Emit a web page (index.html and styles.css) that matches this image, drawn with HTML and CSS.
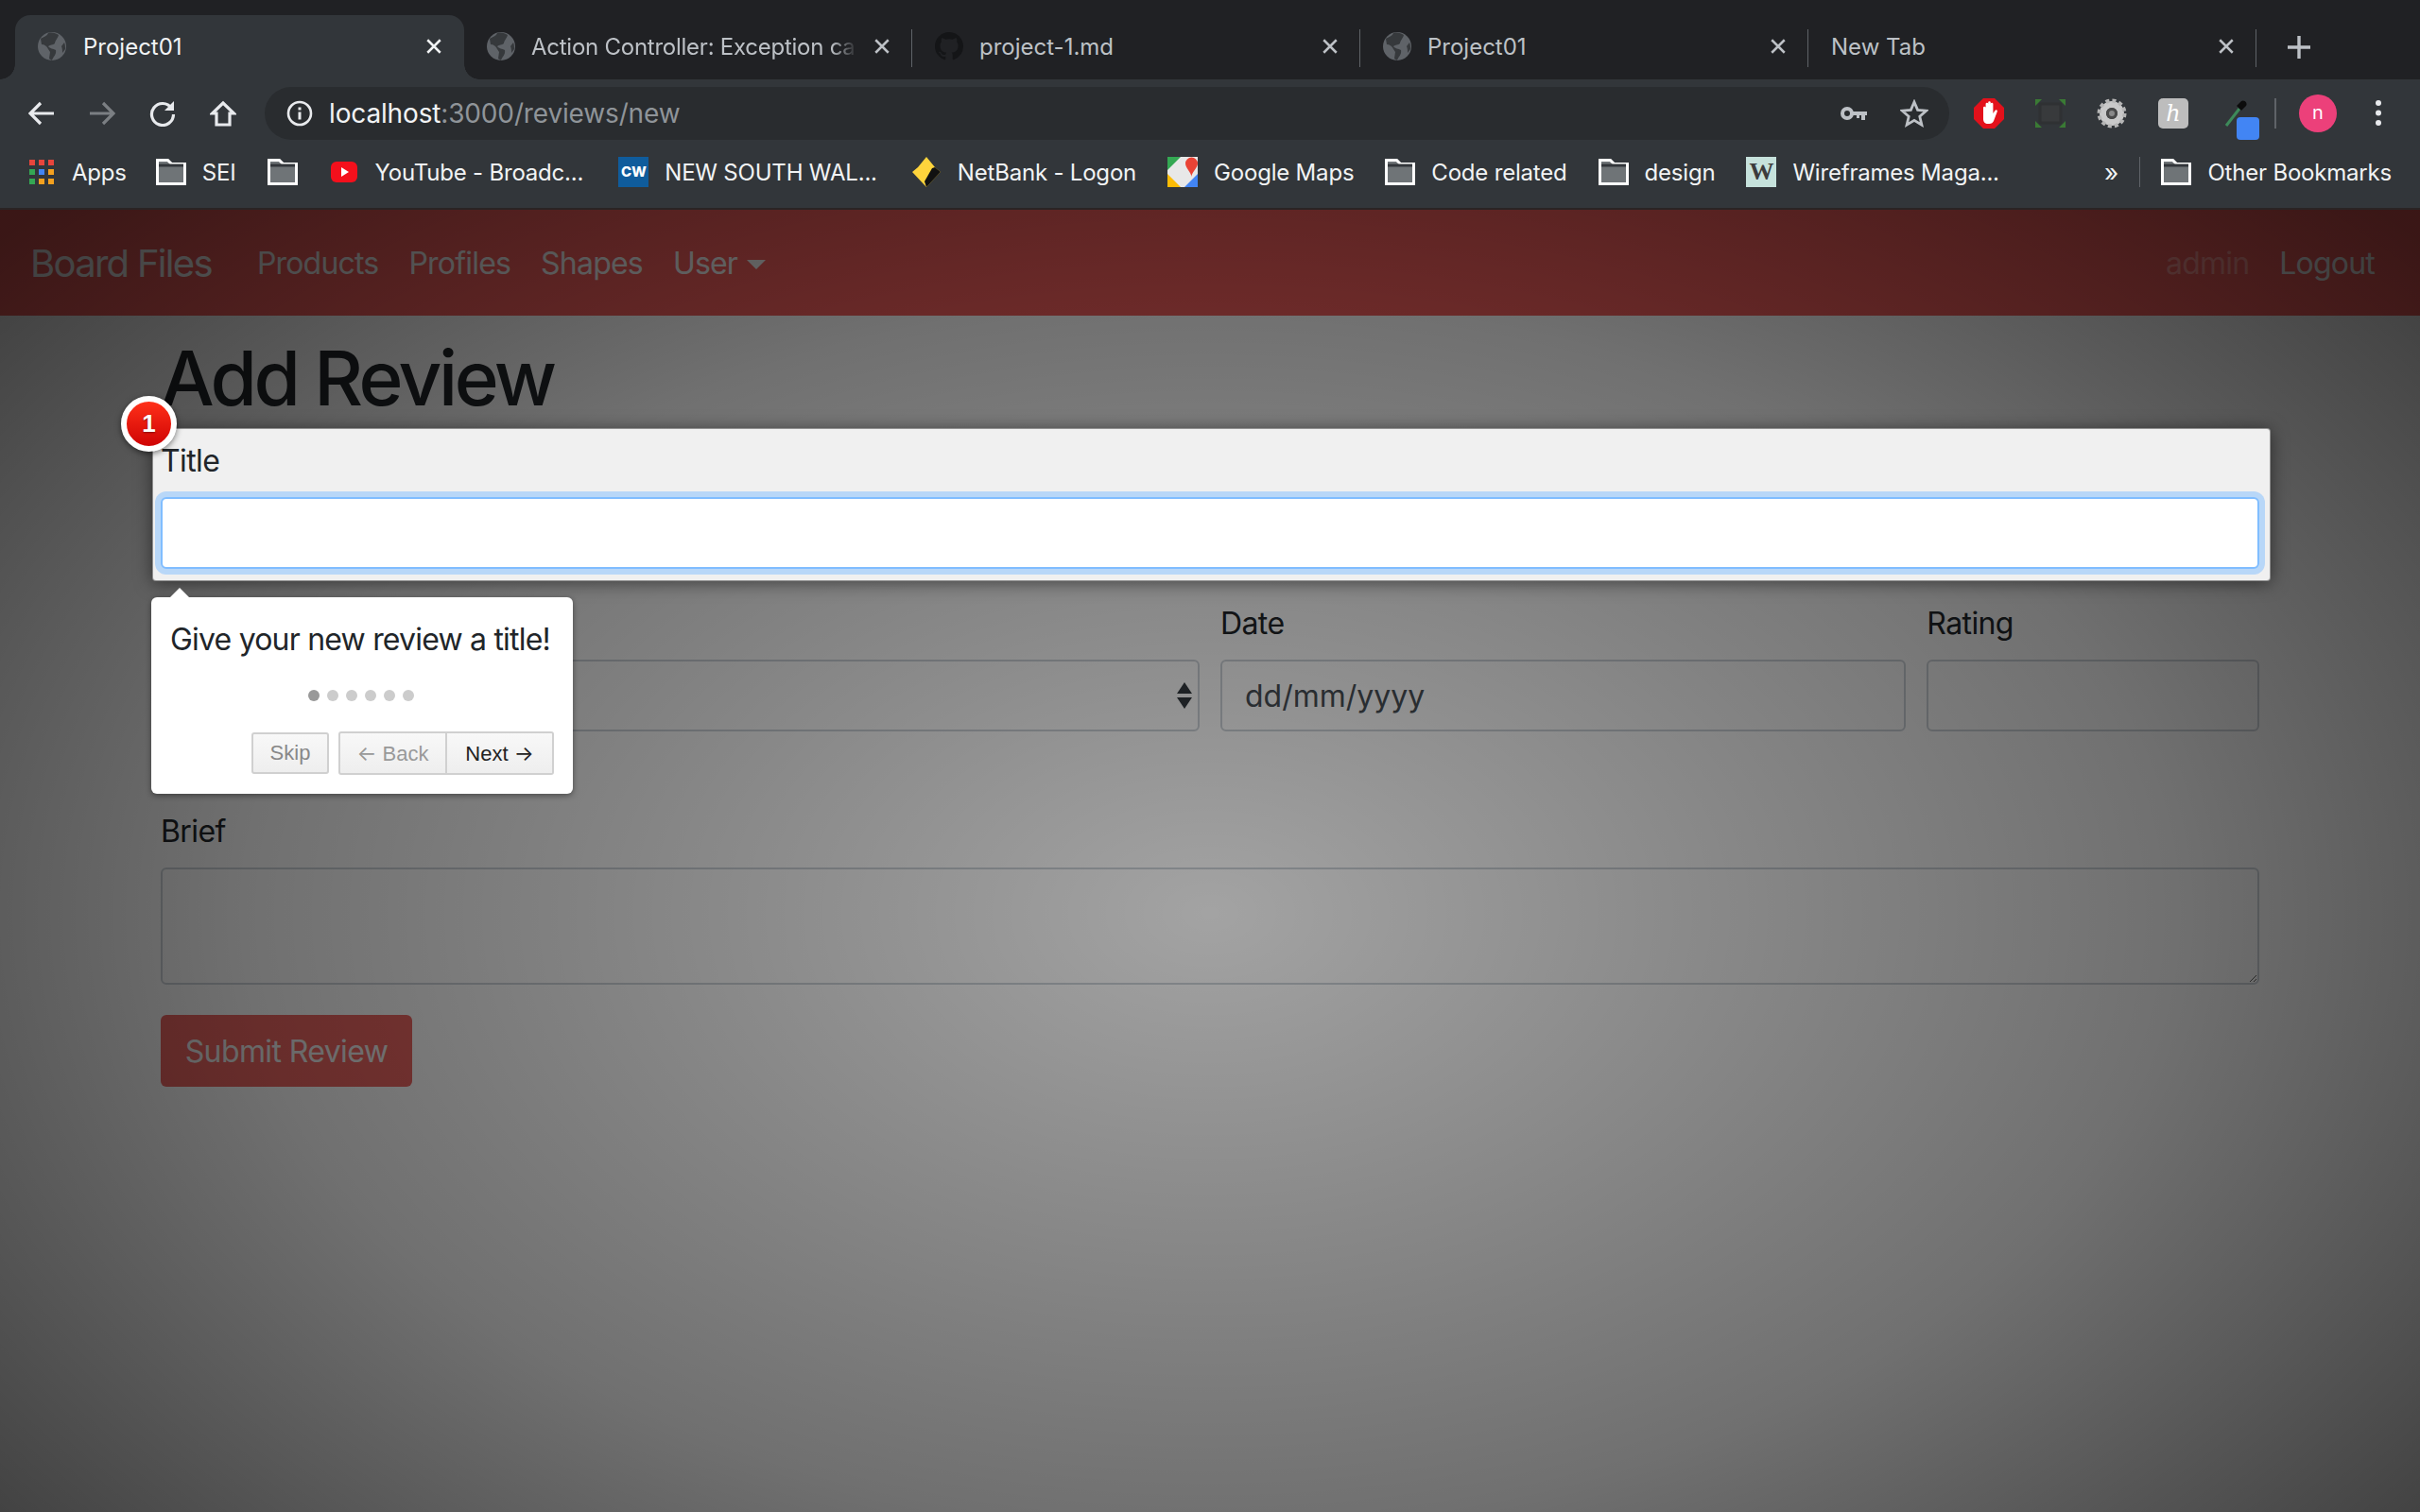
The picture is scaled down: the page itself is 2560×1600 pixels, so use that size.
FILE: index.html
```html
<!DOCTYPE html>
<html lang="en">
  <head>
    <meta charset="UTF-8" />
    <title>Project01</title>
    <link rel="stylesheet" href="styles.css">
  </head>
  <body>
    <svg class="sprites" width="0" height="0">
      <symbol id="globe" viewBox="0 0 30 30">
        <circle cx="15" cy="15" r="15" fill="#5f6368"/>
        <path d="M11 1c-1 3-5 4-8 6l1 6c3 0 6 2 7 5l2 3-1 7 3 2c1-4 5-6 4-11-3-2-6-1-8-4 2-2 5-1 7-3 0-3 3-5 4-9-3-2-7-3-11-2zM25 15c1 2 1 5 1 7l3-4c0-2 0-5-1-7z" fill="#36393c"/>
      </symbol>
      <symbol id="close" viewBox="0 0 16 16">
        <path d="M2 2l12 12M14 2L2 14" fill="none" stroke="currentColor" stroke-width="2.2"/>
      </symbol>
      <symbol id="folder" viewBox="0 0 32 28">
        <path d="M1.5 26.5V1.5h11l4 4h14v21z" fill="#6f7477" stroke="#fff" stroke-width="3"/>
        <path d="M3 7h26" stroke="#32363a" stroke-width="3"/>
      </symbol>
    </svg>

    <!-- tabs -->
    <div class="tabstrip">
      <div class="tab tab-active">
        <svg class="favicon"><use href="#globe"/></svg>
        <span class="tab-label">Project01</span>
        <svg class="tab-close"><use href="#close"/></svg>
      </div>
      <div class="tab">
        <svg class="favicon"><use href="#globe"/></svg>
        <span class="tab-label tab-fade">Action Controller: Exception ca</span>
        <svg class="tab-close"><use href="#close"/></svg>
      </div>
      <div class="tab">
        <svg class="favicon" viewBox="0 0 16 16"><path fill="#141517" d="M8 0C3.58 0 0 3.58 0 8c0 3.54 2.29 6.53 5.47 7.59.4.07.55-.17.55-.38 0-.19-.01-.82-.01-1.49-2.01.37-2.53-.49-2.69-.94-.09-.23-.48-.94-.82-1.13-.28-.15-.68-.52-.01-.53.63-.01 1.08.58 1.23.82.72 1.21 1.87.87 2.33.66.07-.52.28-.87.51-1.07-1.78-.2-3.64-.89-3.64-3.95 0-.87.31-1.59.82-2.15-.08-.2-.36-1.02.08-2.12 0 0 .67-.21 2.2.82.64-.18 1.32-.27 2-.27.68 0 1.36.09 2 .27 1.53-1.04 2.2-.82 2.2-.82.44 1.1.16 1.92.08 2.12.51.56.82 1.27.82 2.15 0 3.07-1.87 3.75-3.65 3.95.29.25.54.73.54 1.48 0 1.07-.01 1.93-.01 2.2 0 .21.15.46.55.38A8.013 8.013 0 0016 8c0-4.42-3.58-8-8-8z"/></svg>
        <span class="tab-label">project-1.md</span>
        <svg class="tab-close"><use href="#close"/></svg>
      </div>
      <div class="tab">
        <svg class="favicon"><use href="#globe"/></svg>
        <span class="tab-label">Project01</span>
        <svg class="tab-close"><use href="#close"/></svg>
      </div>
      <div class="tab">
        <span class="tab-label">New Tab</span>
        <svg class="tab-close"><use href="#close"/></svg>
      </div>
      <svg class="new-tab" viewBox="0 0 24 24"><path d="M12 0v24M0 12h24" stroke="#bdc1c6" stroke-width="3.4"/></svg>
    </div>

    <!-- toolbar -->
    <div class="toolbar">
      <svg class="nav-icon nav-back" viewBox="0 0 28 26"><path d="M27 13H3M13 2L2 13l11 11" fill="none" stroke="#e8eaed" stroke-width="3.2"/></svg>
      <svg class="nav-icon nav-forward" viewBox="0 0 28 26"><path d="M1 13h24M15 2l11 11-11 11" fill="none" stroke="#7b7f83" stroke-width="3.2"/></svg>
      <svg class="nav-icon nav-reload" viewBox="0 0 28 28"><path d="M23.5 8.5A11.5 11.5 0 1 0 25.5 15" fill="none" stroke="#e8eaed" stroke-width="3.2"/><path d="M26 1v10H16z" fill="#e8eaed"/></svg>
      <svg class="nav-icon nav-home" viewBox="0 0 28 28"><path d="M14 3L2.500 14H7v12h14V14h4.500z" fill="none" stroke="#e8eaed" stroke-width="3.200"/></svg>

      <div class="omnibox">
        <svg class="site-info" viewBox="0 0 28 28"><circle cx="14" cy="14" r="12" fill="none" stroke="#e8eaed" stroke-width="2.600"/><path d="M14 12.500v8M14 7.500v3" stroke="#e8eaed" stroke-width="3"/></svg>
        <span class="url"><span class="url-host">localhost</span>:3000/reviews/new</span>
        <svg class="omni-key" viewBox="0 0 28 16"><circle cx="7" cy="8" r="5" fill="none" stroke="#bdc1c6" stroke-width="4"/><path d="M11 6h17v4h-2v5h-4v-5h-2v3h-3v-3h-6z" fill="#bdc1c6"/></svg>
        <svg class="omni-star" viewBox="0 0 30 30"><path d="M15 3l3.600 8.400 9.100.8-6.900 6 2.100 8.900L15 22.400l-7.900 4.700 2.100-8.900-6.900-6 9.100-.8z" fill="none" stroke="#bdc1c6" stroke-width="2.800"/></svg>
      </div>

      <div class="extensions">
        <svg class="ext ext-block" viewBox="0 0 32 32"><path d="M10 0h12l10 10v12L22 32H10L0 22V10z" fill="#e3111b"/><path d="M10 15V10a1.300 1.300 0 0 1 2.600 0V6a1.300 1.300 0 0 1 2.600 0V4.500a1.300 1.300 0 0 1 2.600 0V6a1.300 1.300 0 0 1 2.600 0v10l2-3c1-1.500 3-.500 2.400 1l-3.800 10c-.8 2-2.500 3-4.500 3H15c-3 0-5-2-5-5z" fill="#fff"/></svg>
        <svg class="ext ext-frame" viewBox="0 0 32 30"><rect x="5" y="5" width="22" height="20" rx="1" fill="#383a3c" stroke="#2f3133" stroke-width="3"/><path d="M0 0h7L0 7zM32 0h-7l7 7zM0 30h7l-7-7zM32 30h-7l7-7z" fill="#3a7a34"/></svg>
        <svg class="ext ext-gear" viewBox="0 0 32 32"><circle cx="16" cy="16" r="9.500" fill="none" stroke="#c9c9c9" stroke-width="7"/><circle cx="16" cy="16" r="13.500" fill="none" stroke="#b5b5b5" stroke-width="4" stroke-dasharray="4 3.070"/><circle cx="16" cy="16" r="6" fill="#4a4a4a"/><circle cx="16" cy="16" r="3" fill="#8a8a8a"/></svg>
        <div class="ext ext-kite">h</div>
        <div class="ext-dropper">
          <svg class="dropper" viewBox="0 0 28 32"><path d="M4 29L18 11" stroke="#3d8a5a" stroke-width="3"/><path d="M15 8l5 5 5-5c2-3-2-7-5-5z" fill="#0c0c0c"/></svg>
          <span class="dropper-badge"></span>
        </div>
        <span class="ext-divider"></span>
        <div class="avatar">n</div>
        <svg class="menu-dots" viewBox="0 0 6 28"><circle cx="3" cy="3" r="3" fill="#e8eaed"/><circle cx="3" cy="13.500" r="3" fill="#e8eaed"/><circle cx="3" cy="24" r="3" fill="#e8eaed"/></svg>
      </div>
    </div>

    <!-- bookmarks -->
    <div class="bookmarks">
      <div class="bm bm-apps">
        <svg class="bm-icon" viewBox="0 0 26 26">
          <path d="M0 0h6v6H0zM10 0h6v6h-6zM20 0h6v6h-6z" fill="#e8453c"/>
          <path d="M0 10h6v6H0z" fill="#34a853"/><path d="M10 10h6v6h-6z" fill="#4285f4"/><path d="M20 10h6v6h-6z" fill="#f4a11f"/>
          <path d="M0 20h6v6H0z" fill="#34a853"/><path d="M10 20h6v6h-6zM20 20h6v6h-6z" fill="#f4a11f"/>
        </svg>
        Apps
      </div>
      <div class="bm"><svg class="bm-icon bm-folder"><use href="#folder"/></svg>SEI</div>
      <div class="bm"><svg class="bm-icon bm-folder"><use href="#folder"/></svg></div>
      <div class="bm">
        <svg class="bm-icon" viewBox="0 0 28 28"><rect y="3" width="28" height="22" rx="6" fill="#f4101c"/><path d="M11 9l8 5-8 5z" fill="#fff"/></svg>
        YouTube - Broadc...
      </div>
      <div class="bm bm-cw">
        <div class="bm-square bm-square-cw">CW</div>
        NEW SOUTH WAL...
      </div>
      <div class="bm bm-netbank">
        <svg class="bm-icon bm-tall" viewBox="0 0 32 32"><path d="M16 0l9 11 6 5-15 16L1 16l6-5z" fill="#ffd43c"/><path d="M31 16L16 32l-2-6 8-14 3-1z" fill="#111"/></svg>
        NetBank - Logon
      </div>
      <div class="bm">
        <svg class="bm-icon bm-tall" viewBox="0 0 32 32"><path d="M0 0h32v32H0z" fill="#e8e8e8"/><path d="M0 0h14L0 14z" fill="#34a853"/><path d="M0 32V18l14 14z" fill="#fbbc05"/><path d="M18 32L32 18v14z" fill="#4285f4"/><path d="M19 7a6.500 6.500 0 0 1 13 0c0 5-6.500 9-6.500 14-.5-5-6.500-9-6.500-14z" fill="#ea4335"/></svg>
        Google Maps
      </div>
      <div class="bm"><svg class="bm-icon bm-folder"><use href="#folder"/></svg>Code related</div>
      <div class="bm"><svg class="bm-icon bm-folder"><use href="#folder"/></svg>design</div>
      <div class="bm">
        <div class="bm-square bm-square-w">W</div>
        Wireframes Maga...
      </div>
      <span class="bm-more">»</span>
      <span class="bm-divider"></span>
      <div class="bm"><svg class="bm-icon bm-folder"><use href="#folder"/></svg>Other Bookmarks</div>
    </div>

    <!-- page -->
    <div class="page">
      <nav class="navbar">
        <a class="brand">Board Files</a>
        <a class="nav-link">Products</a>
        <a class="nav-link">Profiles</a>
        <a class="nav-link">Shapes</a>
        <a class="nav-link nav-caret">User</a>
        <a class="nav-link nav-admin">admin</a>
        <a class="nav-link">Logout</a>
      </nav>

      <main class="content">
        <h1>Add Review</h1>
        <form>
          <div class="form-group title-group">
            <label class="field-label">Title</label>
            <input class="field field-focus" type="text">
            <span class="step-badge">1</span>

            <div class="tour-tip">
              <p class="tour-text">Give your new review a title!</p>
              <div class="tour-dots">
                <span class="dot dot-on"></span>
                <span class="dot"></span>
                <span class="dot"></span>
                <span class="dot"></span>
                <span class="dot"></span>
                <span class="dot"></span>
              </div>
              <div class="tour-buttons">
                <button type="button" class="tour-btn tour-skip">Skip</button>
                <div class="tour-pair">
                  <button type="button" class="tour-btn tour-back"><span class="tour-arrow">←</span> Back</button>
                  <button type="button" class="tour-btn tour-next">Next <span class="tour-arrow">→</span></button>
                </div>
              </div>
            </div>
          </div>

          <div class="form-row">
            <div class="col col-6">
              <label class="field-label">Product</label>
              <div class="select-wrap"><select class="field"><option></option></select></div>
            </div>
            <div class="col col-4">
              <label class="field-label">Date</label>
              <input class="field" type="text" placeholder="dd/mm/yyyy">
            </div>
            <div class="col col-2">
              <label class="field-label">Rating</label>
              <input class="field" type="text">
            </div>
          </div>

          <div class="form-group">
            <label class="field-label">Brief</label>
            <textarea class="field field-area"></textarea>
          </div>

          <button type="button" class="btn-submit">Submit Review</button>
        </form>
      </main>

      <div class="overlay"></div>
    </div>
  </body>
</html>
```

FILE: styles.css
```css
* {
  box-sizing: border-box;
}

html,
body {
  margin: 0;
  height: 100%;
}

body {
  display: flex;
  flex-direction: column;
  font-family: Inter, "Noto Sans", sans-serif;
  background: #fff;
  overflow: hidden;
}

.sprites {
  position: absolute;
}

/* tabs */
.tabstrip {
  display: flex;
  align-items: flex-end;
  height: 84px;
  padding-left: 16px;
  background: #202124;
  flex: none;
}

.tab {
  position: relative;
  display: flex;
  align-items: center;
  gap: 17px;
  width: 474px;
  height: 68px;
  padding: 0 20px 2px 24px;
  color: #bdc1c6;
  font-size: 24px;
}

.tab::after {
  content: "";
  position: absolute;
  right: 0;
  top: 15px;
  height: 40px;
  width: 1.500px;
  background: #5f6368;
}

.tab-active {
  width: 475px;
  gap: 18px;
  color: #f1f3f4;
  background: #32363a;
  border-radius: 16px 16px 0 0;
}

.tab-active::after {
  display: none;
}

.tab-active::before {
  content: "";
  position: absolute;
  left: -16px;
  right: -16px;
  bottom: 0;
  height: 16px;
  z-index: 0;
  background:
    radial-gradient(circle at 0 0, #202124 15.500px, #32363a 16px) left bottom / 16px 16px no-repeat,
    radial-gradient(circle at 100% 0, #202124 15.500px, #32363a 16px) right bottom / 16px 16px no-repeat;
  pointer-events: none;
}

.favicon {
  width: 30px;
  height: 36px;
  flex: none;
}

.tab-label {
  flex: 1;
  white-space: nowrap;
  overflow: hidden;
}

.tab-fade {
  letter-spacing: -0.25px;
  -webkit-mask-image: linear-gradient(to right, #000 92%, transparent 100%);
  mask-image: linear-gradient(to right, #000 92%, transparent 100%);
}

.tab-close {
  position: relative;
  width: 18px;
  height: 18px;
  flex: none;
  margin-right: 3px;
}

.new-tab {
  width: 24px;
  height: 24px;
  margin: 0 0 22px 33px;
}

/* toolbar */
.toolbar {
  display: flex;
  align-items: center;
  height: 72px;
  padding-left: 30px;
  background: #32363a;
  flex: none;
}

.nav-icon {
  width: 28px;
  height: 28px;
  flex: none;
}

.nav-forward,
.nav-reload,
.nav-home {
  margin-left: 36px;
}

.omnibox {
  display: flex;
  align-items: center;
  width: 1782px;
  height: 56px;
  margin-left: 30px;
  padding: 0 22px 0 23px;
  background: #292c2f;
  border-radius: 28px;
  flex: none;
}

.site-info {
  width: 28px;
  height: 28px;
  flex: none;
}

.url {
  flex: 1;
  margin-left: 17px;
  font-size: 28px;
  letter-spacing: -0.15px;
  color: #8f9499;
}

.url-host {
  color: #f1f3f4;
}

.omni-key {
  width: 28px;
  height: 16px;
}

.omni-star {
  width: 30px;
  height: 30px;
  margin-left: 35px;
}

.extensions {
  display: flex;
  align-items: center;
  margin-left: 26px;
  flex: 1;
}

.ext {
  width: 32px;
  height: 32px;
  flex: none;
}

.ext-frame,
.ext-gear,
.ext-kite {
  margin-left: 33px;
}

.ext-kite {
  border-radius: 5px;
  background: #bdbdbd;
  color: #fff;
  font-family: "DejaVu Serif", serif;
  font-style: italic;
  font-size: 24px;
  line-height: 32px;
  text-align: center;
}

.ext-dropper {
  position: relative;
  width: 32px;
  height: 32px;
  margin-left: 36px;
}

.dropper {
  width: 28px;
  height: 32px;
}

.dropper-badge {
  position: absolute;
  left: 15px;
  top: 20px;
  width: 24px;
  height: 24px;
  border-radius: 4px;
  background: #4285f4;
}

.ext-divider {
  width: 2px;
  height: 32px;
  margin-left: 23px;
  background: #5f6368;
}

.avatar {
  width: 40px;
  height: 40px;
  margin-left: 24px;
  border-radius: 50%;
  background: #ec407a;
  color: #fff;
  font-size: 20px;
  line-height: 38px;
  text-align: center;
}

.menu-dots {
  width: 6px;
  height: 28px;
  margin-left: 41px;
}

/* bookmarks */
.bookmarks {
  display: flex;
  align-items: center;
  gap: 33px;
  height: 66px;
  padding: 0 0 12px 31px;
  background: #32363a;
  border-bottom: 2px solid #2a2424;
  color: #f1f3f4;
  font-size: 24px;
  letter-spacing: -0.2px;
  flex: none;
}

.bm {
  display: flex;
  align-items: center;
  gap: 17px;
  white-space: nowrap;
}

.bm-apps {
  gap: 19px;
  margin-right: -2px;
}

.bm-cw {
  margin-left: 4px;
}

.bm-netbank {
  margin-left: 3px;
}

.bm-icon {
  width: 32px;
  height: 28px;
  flex: none;
}

.bm-apps .bm-icon {
  width: 26px;
  height: 26px;
}

.bm-tall {
  height: 32px;
}

.bm-square {
  width: 32px;
  height: 32px;
  flex: none;
  text-align: center;
}

.bm-square-cw {
  background: #0f5c9c;
  color: #fff;
  font-size: 15px;
  font-weight: 800;
  line-height: 32px;
}

.bm-square-w {
  background: #c6e2dc;
  color: #3c3c3c;
  font-family: "Liberation Serif", serif;
  font-size: 26px;
  font-weight: 700;
  line-height: 32px;
}

.bm-more {
  margin-left: auto;
  margin-right: -11px;
  font-size: 26px;
}

.bm-divider {
  width: 1.500px;
  height: 32px;
  margin-right: -11px;
  background: #5f6368;
}

.bookmarks > .bm:last-child {
  margin-right: 30px;
}

/* page */
.page {
  position: relative;
  flex: 1;
  color: #212529;
  letter-spacing: -0.6px;
}

.overlay {
  position: absolute;
  inset: 0;
  z-index: 5;
  background: radial-gradient(ellipse 1700px 1080px at 50% 54%, rgba(0, 0, 0, 0.36) 0%, rgba(0, 0, 0, 0.56) 60%, rgba(0, 0, 0, 0.76) 100%);
}

.navbar {
  display: flex;
  align-items: center;
  height: 112px;
  padding: 0 32px;
  background: #f25e5c;
  font-size: 32px;
}

.brand {
  margin-right: 32px;
  font-size: 40px;
  letter-spacing: -1.7px;
  color: #fff;
}

.nav-link {
  padding: 0 16px;
  letter-spacing: -0.8px;
  color: #f4f4f4;
}

.nav-caret::after {
  content: "";
  display: inline-block;
  margin-left: 10px;
  vertical-align: 5px;
  border-top: 10px solid #f4f4f4;
  border-left: 10px solid transparent;
  border-right: 10px solid transparent;
}

.nav-admin {
  margin-left: auto;
  color: #ff9a96;
}

.content {
  padding: 18px 170px 0;
}

h1 {
  margin: 0 0 14px;
  font-size: 80px;
  font-weight: 500;
  line-height: 96px;
  letter-spacing: -3.5px;
}

.form-group {
  margin-bottom: 32px;
}

.field-label {
  display: block;
  margin-bottom: 14px;
  padding-top: 2px;
  font-size: 32px;
  line-height: 48px;
}

.field {
  display: block;
  width: 100%;
  height: 76px;
  padding: 12px 24px;
  background: #fff;
  border: 2px solid #ced4da;
  border-radius: 6px;
  color: #495057;
  font: inherit;
  font-size: 32px;
  outline: none;
  appearance: none;
}

.field::placeholder {
  color: #495057;
  opacity: 1;
}

.field-area {
  height: 124px;
}

.select-wrap {
  position: relative;
}

.select-wrap::before,
.select-wrap::after {
  content: "";
  position: absolute;
  right: 8px;
  border-left: 8px solid transparent;
  border-right: 8px solid transparent;
}

.select-wrap::before {
  top: 24px;
  border-bottom: 12px solid #343a40;
}

.select-wrap::after {
  top: 40px;
  border-top: 12px solid #343a40;
}

.form-row {
  display: flex;
  margin: 0 -11px 80px;
}

.col {
  padding: 0 11px;
}

.col-6 {
  width: 50%;
}

.col-4 {
  width: 33.333%;
}

.col-2 {
  width: 16.667%;
}

.btn-submit {
  display: block;
  width: 266px;
  height: 76px;
  background: #ec6662;
  border: 0;
  border-radius: 6px;
  color: #eee;
  font: inherit;
  font-size: 32px;
  letter-spacing: -0.6px;
}

/* highlighted step */
.title-group {
  position: relative;
  z-index: 10;
  margin-bottom: 32px;
}

.title-group::before {
  content: "";
  position: absolute;
  inset: -9px -12px -13px -9px;
  z-index: -1;
  background: #f0f0f0;
  border: 1px solid rgba(80, 80, 80, 0.6);
  border-radius: 4px;
  box-shadow: 0 2px 18px rgba(0, 0, 0, 0.5);
}

.field-focus {
  border-color: #80bdff;
  box-shadow: 0 0 0 6px rgba(128, 189, 255, 0.5);
}

.step-badge {
  position: absolute;
  left: -42px;
  top: -43px;
  width: 59px;
  height: 59px;
  background: linear-gradient(to bottom, #ff3019 0%, #cf0404 100%);
  border: 6px solid #fff;
  border-radius: 50%;
  box-shadow: 0 2px 6px rgba(0, 0, 0, 0.5);
  color: #fff;
  font-family: "Liberation Sans", sans-serif;
  font-size: 26px;
  font-weight: 700;
  line-height: 46px;
  text-align: center;
  text-shadow: 0 1px 2px rgba(0, 0, 0, 0.4);
  letter-spacing: 0;
}

.tour-tip {
  position: absolute;
  left: -10px;
  top: 170px;
  width: 446px;
  height: 208px;
  padding: 21px 20px 20px 20px;
  background: #fff;
  border-radius: 6px;
  box-shadow: 0 2px 6px rgba(0, 0, 0, 0.4);
}

.tour-tip::before {
  content: "";
  position: absolute;
  left: 20px;
  top: -10px;
  border-left: 10px solid transparent;
  border-right: 10px solid transparent;
  border-bottom: 10px solid #fff;
}

.tour-text {
  margin: 0;
  font-size: 32px;
  line-height: 48px;
  letter-spacing: -0.8px;
  white-space: nowrap;
}

.tour-dots {
  display: flex;
  justify-content: center;
  gap: 8px;
  margin: 29px 2px 0 0;
}

.dot {
  width: 12px;
  height: 12px;
  border-radius: 50%;
  background: #ccc;
}

.dot-on {
  background: #999;
}

.tour-buttons {
  display: flex;
  justify-content: flex-end;
  align-items: center;
  gap: 10px;
  margin-top: 32px;
}

.tour-btn {
  height: 44px;
  padding: 0;
  background: linear-gradient(#f8f8f8, #eee);
  border: 2px solid #d0d0d0;
  border-radius: 3px;
  color: #222;
  font-family: "Liberation Sans", sans-serif;
  font-size: 22px;
}

.tour-arrow {
  font-family: Inter, sans-serif;
  font-size: 22px;
}

.tour-skip {
  width: 82px;
  color: #888;
}

.tour-pair {
  display: flex;
}

.tour-back {
  width: 115px;
  height: 46px;
  color: #999;
  border-radius: 3px 0 0 3px;
}

.tour-next {
  width: 113px;
  height: 46px;
  border-left: 0;
  border-radius: 0 3px 3px 0;
}
```
